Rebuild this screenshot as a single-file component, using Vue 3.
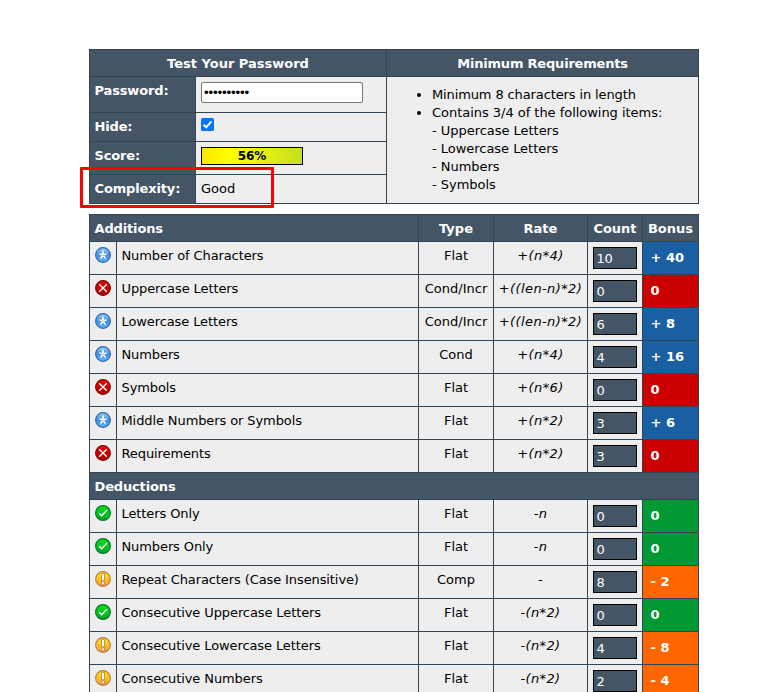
<script setup>
const additions = [
  { icon: 'star', name: 'Number of Characters', type: 'Flat', rate: '+(n*4)', count: 10, bonus: '+ 40', tone: 'blue' },
  { icon: 'fail', name: 'Uppercase Letters', type: 'Cond/Incr', rate: '+((len-n)*2)', count: 0, bonus: '0', tone: 'red' },
  { icon: 'star', name: 'Lowercase Letters', type: 'Cond/Incr', rate: '+((len-n)*2)', count: 6, bonus: '+ 8', tone: 'blue' },
  { icon: 'star', name: 'Numbers', type: 'Cond', rate: '+(n*4)', count: 4, bonus: '+ 16', tone: 'blue' },
  { icon: 'fail', name: 'Symbols', type: 'Flat', rate: '+(n*6)', count: 0, bonus: '0', tone: 'red' },
  { icon: 'star', name: 'Middle Numbers or Symbols', type: 'Flat', rate: '+(n*2)', count: 3, bonus: '+ 6', tone: 'blue' },
  { icon: 'fail', name: 'Requirements', type: 'Flat', rate: '+(n*2)', count: 3, bonus: '0', tone: 'red' },
]
const deductions = [
  { icon: 'pass', name: 'Letters Only', type: 'Flat', rate: '-n', count: 0, bonus: '0', tone: 'green' },
  { icon: 'pass', name: 'Numbers Only', type: 'Flat', rate: '-n', count: 0, bonus: '0', tone: 'green' },
  { icon: 'warn', name: 'Repeat Characters (Case Insensitive)', type: 'Comp', rate: '-', count: 8, bonus: '- 2', tone: 'orange' },
  { icon: 'pass', name: 'Consecutive Uppercase Letters', type: 'Flat', rate: '-(n*2)', count: 0, bonus: '0', tone: 'green' },
  { icon: 'warn', name: 'Consecutive Lowercase Letters', type: 'Flat', rate: '-(n*2)', count: 4, bonus: '- 8', tone: 'orange' },
  { icon: 'warn', name: 'Consecutive Numbers', type: 'Flat', rate: '-(n*2)', count: 2, bonus: '- 4', tone: 'orange' },
]
const sections = [
  { title: 'Additions', columns: true, rows: additions },
  { title: 'Deductions', columns: false, rows: deductions },
]
</script>

<template>
  <main class="page">
    <svg class="defs" width="0" height="0" aria-hidden="true">
      <defs>
        <linearGradient id="g-star" x1="0" y1="0" x2="0" y2="1">
          <stop offset="0" stop-color="#a3cdf7" /><stop offset="0.5" stop-color="#3f8fe0" /><stop offset="1" stop-color="#62b6ff" />
        </linearGradient>
        <linearGradient id="g-fail" x1="0" y1="0" x2="0" y2="1">
          <stop offset="0" stop-color="#e80808" /><stop offset="0.5" stop-color="#d00000" /><stop offset="1" stop-color="#a80000" />
        </linearGradient>
        <linearGradient id="g-pass" x1="0" y1="0" x2="0" y2="1">
          <stop offset="0" stop-color="#04dc18" /><stop offset="0.5" stop-color="#00c81c" /><stop offset="1" stop-color="#00a028" />
        </linearGradient>
        <linearGradient id="g-warn" x1="0" y1="0" x2="0" y2="1">
          <stop offset="0" stop-color="#ffe10c" /><stop offset="0.5" stop-color="#fdc222" /><stop offset="1" stop-color="#f99a3c" />
        </linearGradient>
      </defs>
    </svg>

    <section class="grid summary">
      <div class="head center">Test Your Password</div>
      <div class="head center tight">Minimum Requirements</div>
      <div class="grid fields">
        <div class="head">Password:</div>
        <div class="cell"><div class="password">••••••••••</div></div>
        <div class="head">Hide:</div>
        <div class="cell">
          <svg class="check" width="13" height="13" viewBox="0 0 13 13">
            <rect width="13" height="13" rx="1.6" fill="#0075ff" />
            <path d="M2.6 6.7 5.2 9.3 10.4 3.3" fill="none" stroke="#fff" stroke-width="2" />
          </svg>
        </div>
        <div class="head">Score:</div>
        <div class="cell"><div class="score">56%</div></div>
        <div class="head">Complexity:</div>
        <div class="cell">Good</div>
        <div class="highlight"></div>
      </div>
      <div class="cell requirements">
        <ul>
          <li class="first">Minimum 8 characters in length</li>
          <li>Contains 3/4 of the following items:<br>- Uppercase Letters<br>- Lowercase Letters<br>- Numbers<br>- Symbols</li>
        </ul>
      </div>
    </section>

    <section class="grid details">
      <template v-for="s in sections" :key="s.title">
        <div class="head" :class="s.columns ? 'title' : 'full'">{{ s.title }}</div>
        <template v-if="s.columns">
          <div class="head center">Type</div>
          <div class="head center">Rate</div>
          <div class="head center">Count</div>
          <div class="head center">Bonus</div>
        </template>
        <template v-for="r in s.rows" :key="r.name">
          <div class="cell">
            <svg class="icon" width="16" height="16" viewBox="0 0 16 16">
              <g v-if="r.icon === 'star'">
                <circle cx="8" cy="8" r="7.4" fill="url(#g-star)" stroke="#2667b4" stroke-width="1.1" />
                <path d="M8 3.4V7.6M4.4 7 8 7.8 11.6 7M5.6 11.6 8 7.8 10.4 11.6" fill="none" stroke="#fff" stroke-width="1.7" />
                <path d="M7.5 7.7h1v1h-1z" fill="#4c94de" />
              </g>
              <g v-else-if="r.icon === 'fail'">
                <circle cx="8" cy="8" r="7.4" fill="url(#g-fail)" stroke="#880000" stroke-width="1.1" />
                <path d="m4.2 4.2 7.6 7.6M11.8 4.2l-7.6 7.6" stroke="#fff" stroke-width="1.4" />
              </g>
              <g v-else-if="r.icon === 'pass'">
                <circle cx="8" cy="8" r="7.4" fill="url(#g-pass)" stroke="#087c30" stroke-width="1.2" />
                <path d="m4.2 8.3 2.5 2.4 5.3-5.7" fill="none" stroke="#fff" stroke-width="1.5" />
              </g>
              <g v-else>
                <circle cx="8" cy="8" r="7.4" fill="url(#g-warn)" stroke="#b9784a" stroke-width="1.1" />
                <path d="M6.2 2.2h3.6v7.8H6.2zM6.2 10.6h3.6v3.4H6.2z" fill="#c48448" />
                <path d="M7 3h2v6.3H7zM7 11.3h2v2H7z" fill="#fff" />
              </g>
            </svg>
          </div>
          <div class="cell name">{{ r.name }}</div>
          <div class="cell center">{{ r.type }}</div>
          <div class="cell center rate">{{ r.rate }}</div>
          <div class="cell"><div class="count">{{ r.count }}</div></div>
          <div class="bonus" :class="r.tone">{{ r.bonus }}</div>
        </template>
      </template>
    </section>
  </main>
</template>

<style>
body { margin: 0; background: #fff; }
</style>

<style scoped>
.page {
  box-sizing: border-box;
  width: 759px;
  height: 692px;
  padding: 49px 0 0 89px;
  overflow: hidden;
  background: #fff;
  color: #000;
  font: 13px/18px Verdana, "DejaVu Sans", sans-serif;
}
.defs { position: absolute; }
.grid { display: grid; gap: 1px; background: #334455; }
.summary {
  width: 608px;
  padding: 1px;
  grid-template-columns: 296px 311px;
  grid-template-rows: 26px 126px;
}
.fields {
  position: relative;
  grid-template-columns: 105px 190px;
  grid-template-rows: 35px 28px 32px 28px;
}
.head, .cell {
  box-sizing: border-box;
  min-width: 0;
  padding: 5px 5px 0;
  white-space: nowrap;
}
.head { background: #445566; color: #fff; font-weight: bold; }
.cell { background: #eee; }
.fields .head, .title, .full { padding-left: 4.5px; letter-spacing: -0.15px; }
.tight { letter-spacing: -0.2px; }
.center { text-align: center; }
.name { padding-left: 4.5px; letter-spacing: -0.1px; }
.password {
  box-sizing: border-box;
  width: 162px;
  height: 21px;
  padding: 0 2px;
  border: 1px solid #767676;
  border-radius: 2px;
  background: #fff;
  font: 13.333px/19px "Liberation Sans", Arial, sans-serif;
  letter-spacing: -0.17px;
}
.check { display: block; }
.score {
  box-sizing: border-box;
  width: 102px;
  height: 18px;
  border: 1px solid #000;
  background: linear-gradient(90deg, #ffe600, #ffff00 28%, #c4e020);
  font-size: 12px;
  font-weight: bold;
  line-height: 16px;
  text-align: center;
}
.highlight {
  position: absolute;
  left: -10px;
  top: 90px;
  box-sizing: border-box;
  width: 194px;
  height: 41px;
  border: 3px solid #f00;
  border-radius: 1px;
}
.requirements { padding-top: 9px; }
ul { margin: 0; padding-left: 40px; letter-spacing: -0.03px; }
.first { letter-spacing: -0.12px; }
.details {
  width: 608px;
  margin-top: 10px;
  padding: 1px;
  grid-template-columns: 26px 301px 74px 93px 54px 55px;
  grid-template-rows: 26px repeat(7, 32px) 26px repeat(6, 32px);
}
.title { grid-column: span 2; }
.full { grid-column: 1 / -1; }
.icon { display: block; }
.rate { font-style: italic; letter-spacing: 0.38px; }
.details .center { padding-left: 0; padding-right: 0; }
.count {
  box-sizing: border-box;
  width: 44px;
  height: 22px;
  padding-left: 2.5px;
  border: 1px solid #000;
  background: #445566;
  color: #fff;
  line-height: 21px;
  letter-spacing: -0.2px;
}
.bonus { padding: 7px 7.5px 0; color: #fff; font-weight: bold; }
.blue { background: #1b5fa3; }
.red { background: #cc0000; }
.green { background: #009933; }
.orange { background: #ff6600; }
</style>
